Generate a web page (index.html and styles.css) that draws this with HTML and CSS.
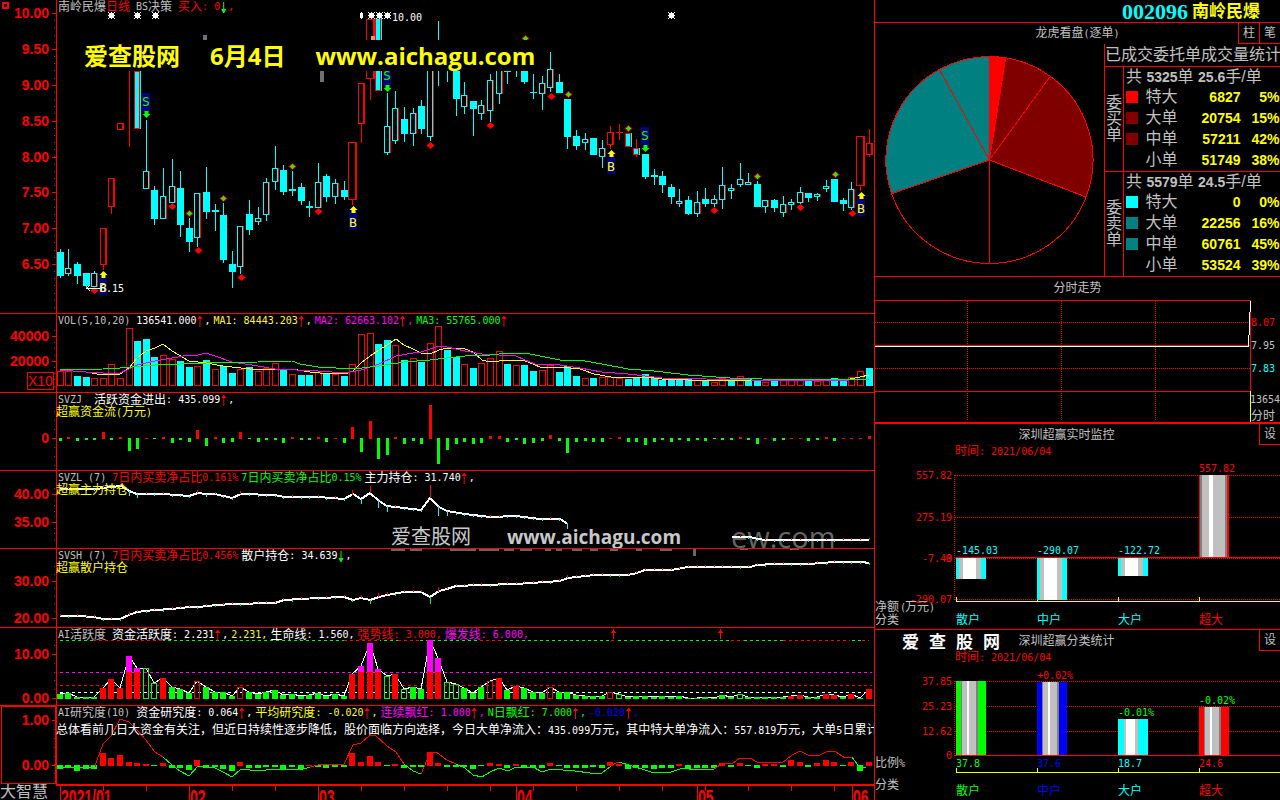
FILE: index.html
```html
<!DOCTYPE html>
<html lang="zh-CN">
<head>
<meta charset="utf-8">
<title>南岭民爆 002096</title>
<link rel="stylesheet" href="styles.css">
</head>
<body>
<div class="app">
  <main class="charts">
    <section class="panel">
      <svg class="plot" id="kline" viewBox="0 0 874 313" preserveAspectRatio="none"></svg>
      <div class="legend kline-legend"><span>南岭民爆</span><span class="red">日线</span><span class="gap-s"><b class="num">BS</b>决策</span><span class="red gap-s">买入<b class="num">: 0</b></span><i class="dn"></i><b class="num red">,</b></div>
      <div class="banner"><span>爱查股网</span><span>6月4日</span><span>www.aichagu.com</span></div>
    </section>
    <section class="panel">
      <svg class="plot" id="vol" viewBox="0 313 874 79" preserveAspectRatio="none"></svg>
      <div class="legend"><b class="num">VOL(5,10,20)</b><span class="white gap-s"><b class="num">136541.000</b><i class="up"></i><b class="num">,</b></span><span class="yellow gap-xs"><b class="num">MA1: 84443.203</b><i class="up"></i><b class="num">,</b></span><span class="magenta gap-xs"><b class="num">MA2: 62663.102</b><i class="up"></i><b class="num">,</b></span><span class="green gap-xs"><b class="num">MA3: 55765.000</b><i class="up"></i></span></div>
    </section>
    <section class="panel">
      <svg class="plot" id="svzj" viewBox="0 392 874 78" preserveAspectRatio="none"></svg>
      <div class="legend"><b class="num">SVZJ</b><span class="white gap-m">活跃资金进出<b class="num">: 435.099</b><i class="up"></i><b class="num">,</b></span></div>
      <div class="subtitle">超赢资金流<b class="num">(</b>万元<b class="num">)</b></div>
    </section>
    <section class="panel">
      <svg class="plot" id="svzl" viewBox="0 470 874 78" preserveAspectRatio="none"></svg>
      <div class="legend"><b class="num">SVZL (7)</b><span class="red gap-s"><b class="num">7</b>日内买卖净占比<b class="num">0.161%</b></span><span class="green gap-xs"><b class="num">7</b>日内买卖净占比<b class="num">0.15%</b></span><span class="white gap-xs">主力持仓<b class="num">: 31.740</b><i class="up"></i><b class="num">,</b></span></div>
      <div class="subtitle">超赢主力持仓</div>
      <div class="stamp"><span>爱查股网</span><span class="site">www.aichagu.com</span></div>
    </section>
    <section class="panel">
      <svg class="plot" id="svsh" viewBox="0 548 874 79" preserveAspectRatio="none"></svg>
      <div class="legend"><b class="num">SVSH (7)</b><span class="red gap-s"><b class="num">7</b>日内买卖净占比<b class="num">0.456%</b></span><span class="white gap-xs">散户持仓<b class="num">: 34.639</b><i class="dn"></i><b class="num">,</b></span></div>
      <div class="subtitle">超赢散户持仓</div>
    </section>
    <section class="panel">
      <svg class="plot" id="active" viewBox="0 627 874 78" preserveAspectRatio="none"></svg>
      <div class="legend"><span><b class="num">AI</b>活跃度</span><span class="white gap-s">资金活跃度<b class="num">: 2.231</b><i class="up"></i><b class="num">,</b></span><b class="num yellow gap-xs">2.231,</b><span class="white gap-xs">生命线<b class="num">: 1.560,</b></span><span class="red gap-xs">强势线<b class="num">: 3.000,</b></span><span class="magenta gap-xs">爆发线<b class="num">: 6.000,</b></span></div>
    </section>
    <section class="panel">
      <svg class="plot" id="research" viewBox="0 705 874 79" preserveAspectRatio="none"></svg>
      <div class="legend"><span><b class="num">AI</b>研究度<b class="num">(10)</b></span><span class="white gap-s">资金研究度<b class="num">: 0.064</b><i class="up"></i><b class="num">,</b></span><span class="yellow gap-xs">平均研究度<b class="num">: -0.020</b><i class="up"></i><b class="num">,</b></span><span class="magenta gap-xs">连续飘红<b class="num">: 1.000</b><i class="up"></i><b class="num">,</b></span><span class="green gap-xs"><b class="num">N</b>日飘红<b class="num">: 7.000</b><i class="up"></i><b class="num">,</b></span><span class="blue gap-xs"><b class="num">-0.020</b><i class="up"></i><b class="num">,</b></span></div>
      <p class="comment">总体看前几日大资金有关注，但近日持续性逐步降低，股价面临方向选择，今日大单净流入：<b class="num">435.099</b>万元，其中特大单净流入：<b class="num">557.819</b>万元，大单<b class="num">5</b>日累计</p>
    </section>
    <footer class="panel">
      <svg class="plot" id="time" viewBox="0 784 874 16" preserveAspectRatio="none"></svg>
      <div class="brand">大智慧</div>
    </footer>
  </main>

  <aside class="side">
    <header class="stock"><span class="code">002096</span><h1>南岭民爆</h1></header>
    <section class="orders">
      <div class="bar"><h2>龙虎看盘<b class="num">(</b>逐单<b class="num">)</b></h2><div class="tools"><button type="button">柱</button><button type="button">笔</button></div></div>
      <div class="orders-body">
        <svg class="pie" id="pie" viewBox="875 44 229 232" role="img" aria-label="委托单比例"></svg>
        <div class="stats">
          <h3>已成交委托单成交量统计</h3>
          <div class="group">
            <div class="vert">委买单</div>
            <table>
              <caption>共 <b>5325</b>单 <b>25.6</b>手/单</caption>
              <tr><td><i class="sw s-red"></i></td><th scope="row">特大</th><td>6827</td><td>5%</td></tr>
              <tr><td><i class="sw s-maroon"></i></td><th scope="row">大单</th><td>20754</td><td>15%</td></tr>
              <tr><td><i class="sw s-maroon"></i></td><th scope="row">中单</th><td>57211</td><td>42%</td></tr>
              <tr><td></td><th scope="row">小单</th><td>51749</td><td>38%</td></tr>
            </table>
          </div>
          <div class="group">
            <div class="vert">委卖单</div>
            <table>
              <caption>共 <b>5579</b>单 <b>24.5</b>手/单</caption>
              <tr><td><i class="sw s-cyan"></i></td><th scope="row">特大</th><td>0</td><td>0%</td></tr>
              <tr><td><i class="sw s-teal"></i></td><th scope="row">大单</th><td>22256</td><td>16%</td></tr>
              <tr><td><i class="sw s-teal"></i></td><th scope="row">中单</th><td>60761</td><td>45%</td></tr>
              <tr><td></td><th scope="row">小单</th><td>53524</td><td>39%</td></tr>
            </table>
          </div>
        </div>
      </div>
    </section>
    <section class="intraday">
      <h2>分时走势</h2>
      <svg class="plot" id="intraday" viewBox="875 300 405 122" preserveAspectRatio="none"></svg>
    </section>
    <section class="monitor">
      <svg class="plot" id="net" viewBox="875 424 405 205" preserveAspectRatio="none"></svg>
      <div class="bar"><h2>深圳超赢实时监控</h2><div class="tools"><button type="button">设</button></div></div>
    </section>
    <section class="classes">
      <svg class="plot" id="ratio" viewBox="875 630 405 170" preserveAspectRatio="none"></svg>
      <div class="bar"><strong class="mark"><span>爱</span><span>查</span><span>股</span><span>网</span></strong><h2>深圳超赢分类统计</h2><div class="tools"><button type="button">设</button></div></div>
    </section>
  </aside>
</div>
<script src="charts.js"></script>
</body>
</html>
```
FILE: styles.css
```css
* { box-sizing: border-box; }
body {
  margin: 0;
  background: #000;
  color: #c0c0c0;
  font-family: "Liberation Sans", "Noto Sans CJK SC", sans-serif;
  font-size: 12px;
  line-height: 12px;
}
h1, h2, h3, p { margin: 0; font-size: inherit; font-weight: 400; }
.app {
  display: grid;
  grid-template-columns: minmax(0, 874fr) minmax(0, 406fr);
  height: 100vh;
  overflow: hidden;
}
.charts {
  display: grid;
  grid-template-rows: 313fr 79fr 78fr 78fr 79fr 78fr 79fr 16fr;
  min-height: 0;
}
.panel {
  display: grid;
  grid-template-rows: 14px 12px minmax(0, 1fr);
  grid-template-columns: minmax(0, 1fr);
  min-height: 0;
  position: relative;
  overflow: hidden;
}
.plot {
  display: block;
  width: 100%;
  height: 100%;
  grid-area: 1 / 1 / -1 / -1;
  min-height: 0;
}
.legend, .subtitle, .comment {
  grid-column: 1;
  white-space: nowrap;
  z-index: 1;
}
.legend {
  grid-row: 1;
  display: flex;
  align-items: center;
  padding: 2px 0 0 58px;
}
.kline-legend { padding-top: 0; }
.legend > span { display: flex; align-items: center; }
.num {
  font: 400 10px/12px "DejaVu Sans Mono", monospace;
  white-space: pre;
}
.subtitle { grid-row: 2; padding-left: 56px; color: #ff0; }
.comment { grid-row: 2 / 4; padding: 4px 0 0 56px; color: #fff; line-height: 14px; }
.gap-xs { margin-left: 3px; }
.gap-s { margin-left: 6px; }
.gap-m { margin-left: 12px; }
.up, .dn { width: 7px; height: 12px; flex: none; background: #f00; margin-right: 1px; }
.up { clip-path: polygon(3px 1px, 4px 1px, 6px 4px, 4px 4px, 4px 12px, 3px 12px, 3px 4px, 1px 4px); }
.dn { background: #0f0; clip-path: polygon(3px 1px, 4px 1px, 4px 8px, 6px 8px, 4px 12px, 3px 12px, 1px 8px, 3px 8px); }
.red { color: #f00; }
.white { color: #fff; }
.yellow { color: #ff0; }
.magenta { color: #f0f; }
.green { color: #0f0; }
.blue { color: #00f; }
.banner {
  position: absolute;
  left: 84px;
  top: 40px;
  display: flex;
  gap: 30px;
  background: #000;
  color: #ff0;
  font: 700 24px/31px "Open Sans", "Noto Sans CJK SC", sans-serif;
  white-space: nowrap;
}
.stamp {
  position: absolute;
  left: 391px;
  bottom: 0;
  display: flex;
  gap: 36px;
  color: #c8c8c8;
  font: 400 20px/22px "Open Sans", "Noto Sans CJK SC", sans-serif;
  white-space: nowrap;
}
.site { font-size: 19px; font-weight: 700; }
.brand { grid-area: 1 / 1 / -1 / -1; font-size: 16px; line-height: 16px; }

.side {
  display: grid;
  grid-template-rows: 22fr 254fr 146fr 207fr 171fr;
  border-left: 1px solid #f00;
  min-height: 0;
}
.side > * { min-height: 0; overflow: hidden; }
.stock {
  display: flex;
  align-items: center;
  justify-content: flex-end;
  gap: 4px;
  padding: 2px 20px 0 0;
}
.code { color: #0ff; font: 700 22px/20px "Liberation Serif", serif; }
.stock h1 { color: #ff0; font-size: 17px; font-weight: 700; line-height: 20px; }
.orders { border-top: 1px solid #f00; display: flex; flex-direction: column; }
.bar {
  display: flex;
  align-items: center;
  justify-content: center;
  position: relative;
  height: 21px;
  flex: none;
}
.tools { position: absolute; right: 0; top: 0; display: flex; height: 21px; }
.tools button {
  width: 21px;
  padding: 0;
  border: solid #f00;
  border-width: 0 0 1px 1px;
  background: #000;
  color: #c0c0c0;
  font: inherit;
}
.orders-body { flex: 1; display: grid; grid-template-columns: minmax(0, 229fr) 176px; min-height: 0; }
.pie { width: 100%; height: 100%; min-height: 0; }
.stats {
  display: flex;
  flex-direction: column;
  border-left: 1px solid #f00;
  font-size: 16px;
  min-height: 0;
}
.stats h3 { font-size: 16px; line-height: 22px; height: 22px; white-space: nowrap; }
.group { flex: 1; display: grid; grid-template-columns: 18px minmax(0, 1fr); border-top: 1px solid #f00; }
.vert { width: 16px; margin-left: 1px; line-height: 16px; align-self: center; }
.group table { border-left: 1px solid #f00; border-collapse: collapse; table-layout: fixed; width: 100%; }
.group caption {
  text-align: left;
  height: 19px;
  line-height: 19px;
  padding-left: 2px;
  border-left: 1px solid #f00;
  white-space: nowrap;
}
.group caption b { font: 700 14px/19px "Liberation Sans", sans-serif; }
.group tr { height: 21px; }
.group td, .group th { padding: 0; line-height: 20px; }
.group th { width: 38px; font-weight: 400; text-align: left; }
.group td { text-align: right; color: #ff0; font: 700 14px/20px "Liberation Sans", sans-serif; }
.group td:first-child { width: 22px; text-align: left; }
.group td:last-child { width: 39px; }
.sw { display: block; width: 12px; height: 12px; margin-left: 2px; }
.s-red { background: #f00; }
.s-maroon { background: #800000; }
.s-cyan { background: #0ff; }
.s-teal { background: #008080; }
.intraday { border-top: 1px solid #f00; display: flex; flex-direction: column; }
.intraday h2 { line-height: 23px; height: 23px; text-align: center; flex: none; }
.intraday .plot { flex: 1; }
.monitor, .classes { display: grid; grid-template: auto minmax(0, 1fr) / minmax(0, 1fr); }
.monitor { border-top: 2px solid #f00; }
.classes { border-top: 1px solid #f00; }
.monitor .bar, .classes .bar { grid-area: 1 / 1; padding-right: 22px; }
.mark {
  position: absolute;
  left: 27px;
  display: flex;
  gap: 10px;
  color: #fff;
  font: 700 17px/20px "Noto Sans CJK SC", sans-serif;
}
svg text { font: 12px "Noto Sans CJK SC", sans-serif; }
svg .n { font: 10px "DejaVu Sans Mono", monospace; white-space: pre; }
svg .axis { font: 700 14px "Liberation Sans", sans-serif; }
svg .scale { font: 14px "Liberation Sans", sans-serif; }
svg .signal { font: 13px "DejaVu Sans Mono", monospace; }
svg .ghost { font: 29px "Open Sans", sans-serif; }
```
FILE: charts.js
```js
const R = '#f00', C = '#0ff', G = '#0f0', W = '#fff', Y = '#ff0', M = '#f0f', S = '#c0c0c0';
const X = i => Math.floor(60.2 + 8.606 * i);
const rect = (x, y, w, h, f) => `<rect x="${x}" y="${y}" width="${w}" height="${h}" fill="${f}" shape-rendering="crispEdges"/>`;
const box = (x, y, w, h, c) => `<rect x="${x + .5}" y="${y + .5}" width="${w - 1}" height="${Math.max(h - 1, 1)}" fill="#000" stroke="${c}" shape-rendering="crispEdges"/>`;
const line = (pts, c, w = 1) => `<polyline points="${pts}" fill="none" stroke="${c}" stroke-width="${w}" shape-rendering="crispEdges"/>`;
const dash = (x1, y1, x2, y2, c, d) => `<path d="M${x1} ${y1 + .5}L${x2} ${y2 + .5}" stroke="${c}" stroke-dasharray="${d}" shape-rendering="crispEdges"/>`;
const vdot = (x, y1, y2) => `<path d="M${x + .5} ${y1}V${y2}" stroke="${R}" stroke-dasharray="1 1" shape-rendering="crispEdges"/>`;
const text = (x, y, s, c, k = '', a = 'start') => `<text x="${x}" y="${y}" fill="${c}" class="${k}" text-anchor="${a}">${s}</text>`;
const put = (id, s) => { document.getElementById(id).innerHTML = s; };

function axis(top, bottom, marks, step) {
  let s = rect(56, top, 1, bottom - top, R);
  if (top) s += rect(0, top, 874, 1, R);
  for (let y = marks[0][1]; y > top + 14; y -= step) s += rect(54, Math.round(y), 1, 1, R);
  for (let y = marks[0][1]; y < bottom - 4; y += step) s += rect(54, Math.round(y), 1, 1, R);
  for (const [t, y] of marks) s += rect(52, y, 5, 1, R) + text(49, y + 5, t, R, 'axis', 'end');
  return s;
}
const diamond = (x, y, c) => `<path d="M${x + .5} ${y - 3}l4 3.5-4 3.5-4-3.5z" fill="${R}"/>` + (c === G ? rect(x - 1, y - 1, 3, 3, G) + rect(x, y - 2, 1, 5, G) + rect(x - 2, y, 5, 1, G) : '');
const arrow = (x, y, c, d) => `<path d="M${x + .5} ${y - 3 * d}l4 ${4 * d}h-2v${3 * d}h-4v${-3 * d}h-2z" fill="${c}"/>`;
const star = x => rect(x - 2, 13, 5, 5, W) + [[-3, 12], [0, 12], [3, 12], [-3, 15], [3, 15], [-3, 18], [0, 18], [3, 18]].map(p => rect(x + p[0], p[1], 1, 1, W)).join('');

const candles = `c249,252,276,278 h249,268,274,276 c262,264,276,284 c273,273,286,289 h271,273,287,287 r228,228,265,270 r178,178,207,214 r123,123,130,130 l71,71,71,147 x71,71,129,129 h120,171,189,189 c186,190,219,225 h168,196,219,219 h159,186,203,203 c171,188,225,237 c218,228,242,252 h193,193,238,247 c167,192,212,219 d204,210,212,231 c203,215,260,263 c251,264,272,288 h226,226,267,274 c200,214,230,235 h207,218,222,225 h178,182,215,221 h146,168,182,190 c165,170,192,195 d171,189,191,196 c183,187,201,205 d201,206,208,217 h163,182,208,208 c174,176,197,202 h179,183,197,204 c181,190,197,200 R142,142,200,205 r83,83,124,143 R19,19,79,100 x18,18,91,91 h93,126,153,155 h91,108,141,144 c107,119,134,142 h108,113,134,146 c100,106,129,134 h60,60,137,141 d21,60,61,86 d50,60,61,82 c60,60,99,116 h82,95,107,114 c101,101,109,136 h100,105,114,120 h74,80,111,122 h60,60,94,104 d70,71,72,84 d60,65,66,77 c60,60,82,84 d74,92,93,99 h76,83,94,110 h52,69,88,92 c74,82,93,93 c99,99,137,149 c130,136,146,150 h133,139,143,150 c138,138,155,155 h140,148,157,168 r126,132,145,149 q124,132,133,140 x133,133,147,147 x139,148,155,157 c154,154,177,179 d169,175,177,185 c171,176,185,193 c184,187,197,204 h189,201,204,207 c196,200,214,215 h191,202,214,217 c188,199,204,207 h195,199,204,207 h167,185,200,209 h184,188,191,199 h163,179,185,187 h173,182,185,185 c181,184,207,207 h200,200,207,213 c199,200,208,212 h196,204,213,217 h199,202,205,210 h187,192,203,204 c193,193,198,202 h193,194,197,201 h180,186,189,192 c179,179,202,202 c198,200,204,211 h182,189,208,210 R136,136,186,191 r129,143,155,157`.split(' ');

let s = axis(0, 313, [['10.00', 13], ['9.50', 49], ['9.00', 85], ['8.50', 121], ['8.00', 157], ['7.50', 192], ['7.00', 228], ['6.50', 264]], 7.17);
s += box(2, 2, 7, 7, R) + box(3, 3, 5, 5, R);
candles.forEach((k, i) => {
  const t = k[0], [hi, a, b, lo] = k.slice(1).split(',').map(Number), x = X(i), c = 'rRlqx'.includes(t) ? R : C;
  s += rect(x, hi, 1, Math.max(lo - hi, 1), c);
  if (t === 'c') s += rect(x - 3, a, 7, b - a, C);
  if (t === 'h') s += box(x - 3, a, 6, b - a, C) + rect(x + 3, a, 1, b - a, R);
  if (t === 'r') s += box(x - 3, a, 7, b - a, R) + rect(x + 2, a, 1, b - a, R);
  if (t === 'R') s += box(x - 4, a, 9, b - a, R) + rect(x + 3, a, 1, b - a, R);
  if (t === 'x') s += rect(x - 3, a, 7, b - a, R) + rect(x - 2, a + 1, 4, b - a - 2, C) + rect(x + 3, a, 1, b - a, C);
  if (t === 'd' || t === 'q') s += rect(x - 3, a, 7, b - a, c);
});
[[94, 290], [172, 206], [198, 250], [241, 277], [318, 211], [430, 145], [490, 125], [551, 96], [714, 210], [800, 207], [852, 213]].forEach(p => { s += diamond(p[0], p[1], R); });
[[189, 213], [223, 198], [292, 166], [525, 38], [568, 94], [628, 128], [757, 176], [835, 174]].forEach(p => { s += diamond(p[0], p[1], G); });
[111, 137, 155, 371, 379, 387, 671].forEach(x => { s += star(x); });
s += rect(360, 13, 3, 5, W) + rect(361, 12, 1, 7, W);
[[103, 277], [353, 212], [611, 156], [861, 198]].forEach(([x, y]) => { s += rect(x - 4, y, 8, 18, '#000080') + text(x, y + 15, 'B', Y, 'signal', 'middle') + arrow(x, y - 3, Y, 1); });
[[146, 93], [387, 67], [645, 127]].forEach(([x, y]) => { s += rect(x - 4, y, 8, 19, '#000080') + text(x, y + 13, 'S', G, 'signal', 'middle') + arrow(x, y + 22, G, -1); });
s += rect(86, 288, 14, 1, W) + line('90,285 87,288 90,291', W) + text(100, 292, '6.15', W, 'n') + text(392, 21, '10.00', W, 'n');
s += rect(203, 35, 4, 5, '#707078') + rect(320, 71, 4, 11, '#707070') + rect(371, 36, 4, 4, '#f88');
put('kline', s);

const vols = 'r371 r371 c376 c377 r378 r378 r364 r378 r328 c341 c339 c357 r355 r359 c361 c367 r366 c360 r369 c366 c373 r369 c367 r371 r368 r363 c370 r374 c375 c375 r372 c374 r374 c376 r364 r334 r333 c344 c340 r345 c360 r358 c362 r343 r326 c350 c357 r364 c368 r363 r358 r351 c364 r365 c365 c371 r370 r365 c372 c366 c376 r378 c378 r377 r377 r378 c379 c378 c374 c378 c380 c379 c380 c379 r380 c381 r382 r378 c379 r376 c379 c380 r382 c381 r380 r380 r380 c381 r381 r379 c378 c380 r377 r371 c368'.split(' ');
s = axis(313, 392, [['40000', 336], ['20000', 361]], 6.2);
vols.forEach((v, i) => { const y = +v.slice(1); s += v[0] === 'r' ? box(X(i) - 3, y, 7, 386 - y, R) : rect(X(i) - 3, y, 7, 386 - y, C); });
s += line('60,370 86,372 103,375 120,374 129,368 137,358 146,351 155,348 163,344 172,351 189,361 206,363 223,366 241,368 258,370 275,369 292,369 310,372 320,373 345,374 353,371 361,363 370,356 379,350 387,345 396,339 404,345 413,349 421,353 430,354 439,350 447,348 465,349 473,352 482,360 490,362 499,361 516,360 525,361 533,364 542,368 560,367 580,369 594,374 611,377 645,377 662,379 688,380 730,380 790,381 830,381 850,379 860,377 869,375', Y);
s += line('60,370 86,372 103,373 120,373 129,369 137,365 155,361 172,358 189,355 198,355 206,353 215,356 232,362 258,366 275,369 318,371 345,373 361,370 379,364 396,356 413,353 421,352 430,349 439,346 447,347 465,351 482,354 499,355 516,356 525,360 535,364 560,365 580,368 602,372 628,374 645,376 662,378 750,380 830,381 869,379', M);
s += line('60,370 103,369 120,368 155,365 180,364 206,363 258,362 292,361 300,364 318,367 353,369 379,366 404,362 430,360 447,358 465,356 490,355 508,353 530,354 560,360 585,361 602,364 628,369 654,371 688,375 730,378 762,379 830,380 869,379', G);
s += box(27, 372, 27, 18, R) + text(28, 386, 'X10', R, 'scale');
put('vol', s);

const flow = [-3, 2, -3, -2, -2, 7, -2, 2, -13, -11, 1, -1, 2, -5, -2, -4, 9, -8, 2, -5, -4, 7, -1, -4, -2, -2, -5, 2, -2, -2, 2, -4, 1, -5, 12, -14, 18, -21, -17, 2, -6, -3, -6, 34, -26, -12, -6, -4, -6, -5, 3, 3, -4, -2, -6, -5, -3, 4, -3, -15, -4, -3, -4, -4, 1, 2, -4, -4, -7, -4, -2, -4, -2, -3, -2, -3, -1, -2, -2, 2, -2, -6, 1, -3, -2, 1, 1, -3, -2, 2, -3, 1, 1, 1, 3];
s = axis(392, 470, [['0', 438]], 9);
flow.forEach((v, i) => { s += v > 0 ? rect(X(i) - 1, 439 - v, 3, v, R) : rect(X(i) - 1, 438, 3, -v, G); });
put('svzj', s);

function holding(pts, down, sign, k) {
  const p = pts.split(' ').map(a => a.split(',').map(Number));
  let out = line(pts, W, 2);
  flow.forEach((v, i) => {
    const x = X(i), j = p.findIndex(q => q[0] >= x);
    if (j < 0 || x < p[0][0]) return;
    const a = p[Math.max(j - 1, 0)], b = p[j];
    const y = Math.round(b[0] === a[0] ? b[1] : a[1] + (b[1] - a[1]) * (x - a[0]) / (b[0] - a[0]));
    const len = Math.max(2, Math.round(Math.abs(v) * k)), up = v * sign > 0;
    out += rect(x, up ? y - len : y, 1, len, up ? R : down);
  });
  return out;
}
s = axis(470, 548, [['40.00', 494], ['35.00', 522]], 5.6);
s += text(731, 548, 'ew.com', '#666', 'ghost');
s += holding('60,489 97,489 110,487 122,486 129,491 137,494 163,494 189,496 198,493 206,494 215,494 232,498 241,494 275,495 284,497 318,497 344,499 353,494 361,499 370,493 379,501 387,506 404,508 421,510 430,498 439,507 447,511 465,514 490,517 516,516 540,519 560,519 568,524', C, 1, .38);
s += holding('732,537 750,537 758,539 766,540 869,540', C, 1, .3);
put('svzl', s);

s = axis(548, 627, [['30.00', 581], ['20.00', 618]], 7.4);
[[391, 14], [410, 12], [450, 26], [479, 20], [504, 10], [520, 12], [545, 6], [556, 6], [572, 10], [590, 8], [610, 8], [636, 6], [660, 12]].forEach(([x, w]) => { s += rect(x, 549, w, 2, '#666'); });
s += rect(693, 549, 3, 7, '#666') + rect(740, 549, 8, 1, '#666') + rect(790, 549, 9, 1, '#666');
s += holding('60,616 78,616 94,617 103,619 120,619 129,615 137,612 155,610 172,609 189,607 200,607 206,606 232,604 275,603 284,600 318,598 344,597 353,600 361,598 370,600 379,597 387,595 404,592 421,592 430,597 439,591 447,589 456,586 480,585 516,584 560,581 568,578 594,575 628,575 637,573 645,570 671,570 688,567 750,567 757,565 774,564 809,564 835,562 862,562 869,563', G, -1, .2);
put('svsh', s);

const act = 'g694 g693 g697 g697 g697 r688 r679 r688 r656 r668 G668 G683 r678 g687 g689 g693 R681 g687 g692 g692 g696 R687 g692 g694 g692 g690 g695 g694 g696 g695 g693 g696 g694 g696 r674 r666 r643 r669 G676 r674 G689 g687 g689 r640 r658 G682 G684 g688 g693 g687 R681 r678 g690 r686 g688 g692 g693 R687 g692 g692 g695 g696 g696 g696 R692 G694 g697 g696 g696 g697 g696 g697 g696 g698 g698 g697 g698 g695 g697 G694 g697 g697 g697 g697 g697 r696 r695 g697 g697 r694 r695 g697 r694 g698 r689'.split(' ');
s = axis(627, 705, [['10.00', 654], ['0.00', 698]], 8.8);
s += dash(60, 640, 870, 640, G, '3 3');
[[93, 163], [344, 380], [398, 420], [480, 505], [611, 617], [731, 744], [783, 850], [862, 869]].forEach(([a, b]) => { s += rect(a, 640, b - a, 1, '#000') + dash(a, 640, b, 640, R, '3 3'); });
s += dash(60, 672, 872, 672, M, '3 3') + dash(60, 685, 872, 685, R, '3 3') + dash(60, 692, 872, 692, W, '3 3');
s += line(act.map((v, i) => X(i) + ',' + v.slice(1)).join(' '), W);
act.forEach((v, i) => {
  const t = v[0], y = +v.slice(1), x = X(i) - 3, c = 'gG'.includes(t) ? G : R;
  s += t === 'g' || t === 'r' ? rect(x, y, 6, 699 - y, c) : `<rect x="${x + .5}" y="${y + .5}" width="5" height="${698 - y}" fill="none" stroke="${c}" shape-rendering="crispEdges"/>`;
  if (t === 'r' && y < 672) s += rect(x, y, 6, 672 - y, M);
});
[613, 720].forEach(x => { s += rect(x, 629, 1, 10, R) + rect(x - 1, 631, 3, 1, R) + rect(x - 2, 632, 5, 1, R); });
put('active', s);

const res = [-4, -3, -6, -4, -4, 13, 8, 11, 4, 3, 2, -1, 3, -3, -3, -5, 6, -3, -2, -4, -6, 4, -3, -3, -2, -2, -4, -2, -4, 1, -2, -3, -2, -2, 13, 4, 10, 4, -1, 2, -3, -2, -2, 14, 3, -2, -2, -2, -4, -1, 3, 2, -3, 2, -3, -3, -3, 3, -1, -3, -3, -3, -2, -3, 4, 2, -4, -3, -3, -4, -3, -3, 2, -4, -3, -3, -3, 3, -2, 3, -1, -3, 2, 2, -2, 6, 4, -2, 3, 6, 4, -1, 4, -6, 4];
s = axis(705, 784, [['1.00', 720], ['0.00', 765]], 8.9) + `<rect x="1.5" y="706.5" width="54" height="77" fill="none" stroke="${R}"/>`;
res.forEach((v, i) => { s += v > 0 ? rect(X(i) - 3, 766 - v, 6, v, R) : rect(X(i) - 3, 765, 6, -v, G); });
['60,767 80,768 95,767', '163,757 172,765 180,771 189,776 198,766 206,767 215,768 223,772 232,777 241,769 258,771 275,769 300,770 310,767', '404,764 413,771 421,774', '456,764 465,768 473,775 482,777 490,772 499,768 508,771 516,767 533,767 542,772 551,769 575,771 590,773 602,773 611,766', '619,762 632,766 645,770 654,773 671,772 683,768 695,770 714,769', '852,757 860,768 866,767'].forEach(p => { s += line(p, G); });
['95,767 97,760 103,744 111,736 120,719 129,722 137,730 146,740 155,752 163,757', '310,767 318,765 344,764 353,745 361,743 370,735 375,735 387,746 396,752 404,764', '421,774 430,753 436,752 447,760 456,764', '611,765 619,762', '714,769 723,763 733,763 740,758 750,758 757,762 782,763 792,755 800,751 810,756 820,755 828,751 836,752 845,758 852,757'].forEach(p => { s += line(p, R); });
put('research', s);

s = rect(56, 784, 818, 1, R);
for (let i = 5; i < 95; i += 5) s += rect(X(i), 784, 1, 4, R);
[[60, '2021/01'], [189, '02'], [318, '03'], [516, '04'], [697, '05'], [852, '06']].forEach(([x, t]) => { s += rect(x, 784, 1, 16, R) + text(x + 1, 797, t, R, 'axis'); });
put('time', s);

const pt = a => (989.5 + 103.5 * Math.sin(a * Math.PI / 180)).toFixed(1) + ' ' + (160 - 103.5 * Math.cos(a * Math.PI / 180)).toFixed(1);
const slice = (a, b, f) => `<path d="M989.5 160L${pt(a)}A103.5 103.5 0 0 1 ${pt(b)}Z" fill="${f}" stroke="${R}" shape-rendering="crispEdges"/>`;
put('pie', slice(0, 9, R) + slice(9, 36, '#800000') + slice(36, 111, '#800000') + slice(111, 180, '#000') + slice(180, 251, '#000') + slice(251, 331, '#008080') + slice(331, 360, '#008080'));

s = rect(875, 300, 376, 1, R) + rect(875, 345, 376, 1, R) + rect(875, 391, 376, 1, R) + rect(1250, 300, 1, 91, R) + rect(1250, 391, 1, 31, Y);
s += dash(875, 322, 1250, 322, R, '1 1') + dash(875, 368, 1250, 368, R, '1 1');
[967, 1061, 1155].forEach(x => { s += vdot(x, 301, 421); });
s += rect(875, 346, 374, 1, W) + rect(1248, 335, 1, 12, W) + rect(1249, 312, 1, 23, W) + rect(1250, 301, 1, 11, W);
s += text(1251, 326, '8.07', R, 'n') + text(1251, 349, '7.95', S, 'n') + text(1251, 372, '7.83', C, 'n') + text(1250, 403, '13654', S, 'n') + text(1251, 420, '分时', S);
put('intraday', s);

const bar = (x, y, h, parts) => { let o = ''; parts.forEach(([w, c]) => { o += rect(x, y, w, h, c); x += w; }); return o; };
const flat = [[3, C], [4, S], [13, W], [5, S], [5, C]];
const names = ['散户', '中户', '大户', '超大'];
const frame = (y, x0) => rect(x0, y, 1280 - x0, 1, Y) + [956, 1037, 1118, 1199].map(x => rect(x, y - 4, 1, 4, Y)).join('');
const when = y => text(955, y + 4, '时间', R) + text(979, y + 4, ': 2021/06/04', R, 'n');

s = when(451);
[[475, '557.82'], [517, '275.19'], [558, '-7.49'], [599, '-290.07']].forEach(([y, t]) => { s += dash(955, y, 1280, y, R, '1 1') + text(952, y + 4, t, R, 'n', 'end'); });
s += text(952, 562, '0', R, 'n', 'end') + vdot(954, 475, 600) + rect(956, 557, 324, 1, R) + frame(601, 956);
s += bar(956, 558, 21, flat) + bar(1037, 558, 42, flat) + bar(1118, 558, 18, flat);
s += bar(1199, 475, 82, [[1, R], [2, '#808080'], [7, S], [4, W], [12, S], [2, '#808080'], [2, R]]);
s += text(956, 554, '-145.03', C, 'n') + text(1037, 554, '-290.07', C, 'n') + text(1118, 554, '-122.72', C, 'n') + text(1199, 472, '557.82', R, 'n');
s += text(875, 611, '净额', S) + text(900, 611, '(', S, 'n') + text(905, 611, '万元', S) + text(929, 611, ')', S, 'n') + text(875, 624, '分类', S);
names.forEach((n, i) => { s += text(956 + 81 * i, 624, n, i === 3 ? R : C); });
put('net', s);

s = when(657);
[[681, '37.85'], [706, '25.23'], [731, '12.62'], [755, '0']].forEach(([y, t]) => { s += dash(955, y, 1280, y, R, '1 1') + text(952, y + 4, t, R, 'n', 'end'); });
s += vdot(954, 681, 756) + rect(956, 755, 324, 1, R) + frame(772, 956);
const tube = c => [[5, c], [1, '#808080'], [5, S], [2, W], [7, S], [2, '#808080'], [8, c]];
s += bar(956, 681, 74, tube(G)) + bar(1037, 682, 73, tube('#00f')) + bar(1118, 719, 36, [[6, C], [2, S], [9, W], [3, S], [10, C]]) + bar(1199, 707, 48, tube(R));
s += text(1037, 679, '+0.02%', R, 'n') + text(1118, 716, '-0.01%', G, 'n') + text(1199, 704, '-0.02%', G, 'n');
['37.8', '37.6', '18.7', '24.6'].forEach((t, i) => { const c = [G, '#00f', C, R][i]; s += text(956 + 81 * i, 767, t, c, 'n') + text(956 + 81 * i, 795, names[i], c); });
s += text(875, 767, '比例', S) + text(899, 767, '%', S, 'n') + text(875, 789, '分类', S);
put('ratio', s);
```
